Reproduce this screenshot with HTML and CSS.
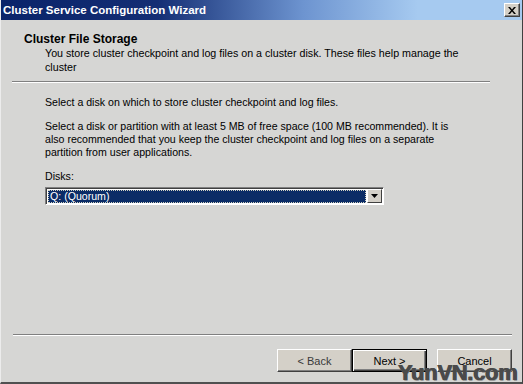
FILE: index.html
```html
<!DOCTYPE html>
<html lang="en">
<head>
    <meta charset="UTF-8">
    <meta name="viewport" content="width=device-width, initial-scale=1.0">
    <title>Cluster Service Configuration Wizard</title>
    <link rel="stylesheet" href="styles.css">
</head>
<body>
    <div class="window">
        <div class="titlebar">
            <span class="title">Cluster Service Configuration Wizard</span>
            <span class="close">
                <svg width="8" height="7" viewBox="0 0 8 7"><path d="M0 0h2l2 2.5L6 0h2L5 3.5 8 7H6L4 4.5 2 7H0l3-3.5z" fill="#000"/></svg>
            </span>
        </div>

        <div class="header">
            <div class="head-title">Cluster File Storage</div>
            <div class="head-sub">You store cluster checkpoint and log files on a cluster disk. These files help manage the cluster</div>
        </div>
        <div class="sep sep-top"></div>

        <div class="content">
            <p>Select a disk on which to store cluster checkpoint and log files.</p>
            <p>Select a disk or partition with at least 5 MB of free space (100 MB recommended). It is also recommended that you keep the cluster checkpoint and log files on a separate partition from user applications.</p>
            <p class="label">Disks:</p>
            <div class="combo">
                <div class="combo-field"><span class="combo-sel">Q: (Quorum)</span></div>
                <div class="combo-btn">
                    <svg width="7" height="4" viewBox="0 0 7 4"><path d="M0 0h7L3.5 4z" fill="#000"/></svg>
                </div>
            </div>
        </div>

        <div class="sep sep-bottom"></div>
        <div class="buttons">
            <div class="btn btn-back">&lt; Back</div>
            <div class="btn btn-default">Next &gt;</div>
            <div class="btn btn-cancel">Cancel</div>
        </div>

        <div class="watermark">YunVN.com</div>
    </div>
</body>
</html>
```

FILE: styles.css
```css
body {
    margin: 0;
    padding: 0;
    background-color: #d6d6d4;
    font-family: 'Liberation Sans', Arial, sans-serif;
    font-size: 11px;
    color: #000;
}
.window {
    position: relative;
    width: 523px;
    height: 384px;
    box-sizing: border-box;
    background-color: #d6d6d4;
    border-left: 1px solid #ececec;
    border-right: 1px solid #404040;
    border-bottom: 2px solid #505050;
    display: flex;
    flex-direction: column;
    overflow: hidden;
}
.titlebar {
    height: 20px;
    display: flex;
    align-items: center;
    justify-content: space-between;
    padding: 0 2px 0 2px;
    background: linear-gradient(to right, #0a246a 0%, #142e74 30%, #6d94d0 58%, #a6caf0 80%, #a6caf0 100%);
}
.title {
    color: #fff;
    font-weight: bold;
    font-size: 11.5px;
}
.close {
    width: 16px;
    height: 14px;
    box-sizing: border-box;
    background-color: #d4d0c8;
    border-top: 1px solid #fff;
    border-left: 1px solid #fff;
    border-right: 1px solid #404040;
    border-bottom: 1px solid #404040;
    box-shadow: inset -1px -1px 0 #808080;
    display: flex;
    align-items: center;
    justify-content: center;
}
.header {
    padding: 12px 0 0 23px;
    line-height: 14px;
}
.head-title {
    font-weight: bold;
    font-size: 12px;
}
.head-sub {
    padding-left: 21px;
    width: 430px;
    font-size: 10.7px;
}
.sep {
    height: 1px;
    background-color: #808080;
    border-bottom: 1px solid #fff;
}
.sep-top {
    margin: 7px 32px 0 11px;
}
.content {
    padding: 13px 0 0 44px;
    line-height: 13px;
    font-size: 10.6px;
    flex: 1;
}
.content p {
    margin: 0 0 11px 0;
    width: 410px;
}
.content p.label {
    margin-bottom: 4px;
}
.combo {
    width: 339px;
    height: 18px;
    box-sizing: border-box;
    display: flex;
    background-color: #fff;
    border-top: 1px solid #808080;
    border-left: 1px solid #808080;
    border-right: 1px solid #fff;
    border-bottom: 1px solid #fff;
    box-shadow: inset 1px 1px 0 #404040;
    padding: 2px 1px 1px 2px;
}
.combo-field {
    flex: 1;
    display: flex;
    padding-right: 1px;
}
.combo-sel {
    flex: 1;
    background-color: #0b2c66;
    color: #fff;
    outline: 1px dotted #d0d0c0;
    outline-offset: -1px;
    padding-left: 2px;
    line-height: 12px;
}
.combo-btn {
    width: 15px;
    box-sizing: border-box;
    background-color: #d4d0c8;
    border-top: 1px solid #fff;
    border-left: 1px solid #fff;
    border-right: 1px solid #404040;
    border-bottom: 1px solid #404040;
    display: flex;
    align-items: center;
    justify-content: center;
    margin-top: -1px;
}
.sep-bottom {
    margin: 0 10px 0 12px;
}
.buttons {
    display: flex;
    justify-content: flex-end;
    padding: 13px 10px 10px 0;
}
.btn {
    width: 75px;
    height: 23px;
    box-sizing: border-box;
    background-color: #d4d0c8;
    border-top: 1px solid #fff;
    border-left: 1px solid #fff;
    border-right: 1px solid #404040;
    border-bottom: 1px solid #404040;
    box-shadow: inset -1px -1px 0 #808080;
    display: flex;
    align-items: center;
    justify-content: center;
}
.btn-back {
    color: #3a3a3a;
}
.btn-default {
    border: 1px solid #000;
    box-shadow: inset 1px 1px 0 #fff, inset -1px -1px 0 #404040, inset -2px -2px 0 #808080;
}
.btn-cancel {
    margin-left: 10px;
}
.watermark {
    position: absolute;
    right: 5px;
    bottom: -4px;
    font-family: 'Liberation Sans', Arial, sans-serif;
    font-weight: bold;
    font-size: 22px;
    letter-spacing: -0.3px;
    color: #4a4a4a;
    text-shadow: 1px 0 0 #4a4a4a, 1px 1px 0 #9a9a9a;
}
```
